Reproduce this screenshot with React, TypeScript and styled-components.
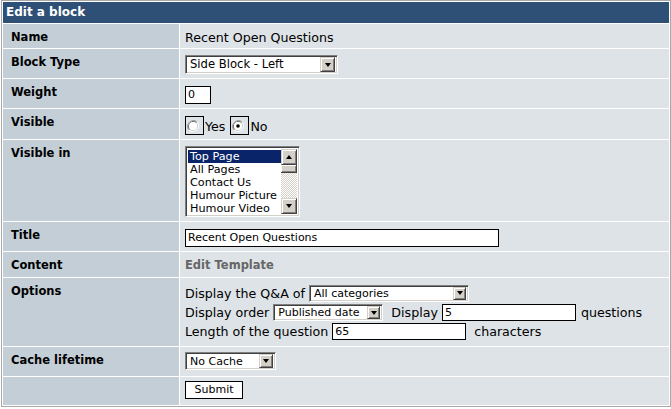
import * as React from 'react';
import styled, { createGlobalStyle } from 'styled-components';

const GlobalStyle = createGlobalStyle`
  body {
    margin: 0;
    background: #ffffff;
    font-family: "DejaVu Sans", Verdana, sans-serif;
    color: #000000;
  }
`;

// row heights read off the original admin table
const BlockForm = styled.div`
  width: 670px;
  margin: 0 0 0 1px;
  box-sizing: border-box;
  border: 1px solid #a8a8a8;
  padding: 1px;
  background: #ffffff;
  display: grid;
  grid-template-columns: 176px 1fr;
  grid-template-rows: 21px 24px 29px 29px 30px 81px 29px 25px 68px 29px 28px;
  gap: 1px;
`;

const Header = styled.div`
  grid-column: 1 / -1;
  line-height: 21px;
  padding: 0 3px;
  background: #2e5077;
  color: #ffffff;
  font-size: 12px;
  font-weight: bold;
`;

const Label = styled.div`
  background: #c3ced7;
  padding: 6px 7px 0 8px;
  font-size: 11.5px;
  line-height: 15px;
  font-weight: bold;
`;

const Value = styled.div<{ $top?: number; $muted?: boolean }>`
  background: #dee3e7;
  padding: ${p => (p.$top === undefined ? 6 : p.$top)}px 5px 0 5px;
  font-size: 12.65px;
  line-height: 15px;
  ${p => (p.$muted ? 'color: #666666; font-weight: bold; font-size: 11.5px;' : '')}
`;

const PlainText = styled.div`
  padding-top: 1px;
  line-height: 14px;
`;

const TextBox = styled.div<{ $w: number; $h?: number }>`
  width: ${p => p.$w}px;
  height: ${p => p.$h || 17}px;
  box-sizing: border-box;
  border: 1px solid #000000;
  background: #ffffff;
  font-size: 11px;
  line-height: ${p => (p.$h || 17) - 2}px;
  padding: 0 2px;
  white-space: nowrap;
  overflow: hidden;
`;

const SelectBox = styled.div<{ $w: number; $h: number; $fs: number }>`
  width: ${p => p.$w}px;
  height: ${p => p.$h}px;
  box-sizing: border-box;
  display: flex;
  align-items: center;
  background: #ffffff;
  border-top: 1px solid #808080;
  border-left: 1px solid #808080;
  border-right: 1px solid #ffffff;
  border-bottom: 1px solid #ffffff;
  box-shadow: inset 1px 1px 0 #404040, inset -1px -1px 0 #d4d0c8;
  padding: 2px 2px 2px 4px;
  font-size: ${p => p.$fs}px;
  white-space: nowrap;
`;

const SelectText = styled.span`
  flex: 1;
`;

const ArrowButton = styled.span<{ $size: number }>`
  width: ${p => p.$size}px;
  height: ${p => p.$size}px;
  box-sizing: border-box;
  display: flex;
  align-items: center;
  justify-content: center;
  background: #d4d0c8;
  border-top: 1px solid #d4d0c8;
  border-left: 1px solid #d4d0c8;
  border-right: 1px solid #404040;
  border-bottom: 1px solid #404040;
  box-shadow: inset 1px 1px 0 #ffffff, inset -1px -1px 0 #808080;
`;

const Triangle = styled.span<{ $up?: boolean }>`
  width: 0;
  height: 0;
  border-left: 3.5px solid transparent;
  border-right: 3.5px solid transparent;
  ${p => (p.$up ? 'border-bottom: 4px solid #000;' : 'border-top: 4px solid #000;')}
`;

const Select: React.FC<{ w: number; h: number; fs: number; text: string }> = ({ w, h, fs, text }) => (
  <SelectBox $w={w} $h={h} $fs={fs}>
    <SelectText>{text}</SelectText>
    <ArrowButton $size={h - 4}>
      <Triangle />
    </ArrowButton>
  </SelectBox>
);

const ListBox = styled.div`
  width: 115px;
  height: 71px;
  box-sizing: border-box;
  display: flex;
  background: #ffffff;
  border-top: 1px solid #808080;
  border-left: 1px solid #808080;
  border-right: 1px solid #ffffff;
  border-bottom: 1px solid #ffffff;
  box-shadow: inset 1px 1px 0 #404040, inset -1px -1px 0 #d4d0c8;
  padding: 2px;
`;

const ListItems = styled.div`
  flex: 1;
  padding-top: 1px;
  overflow: hidden;
`;

const ListItem = styled.div<{ $selected?: boolean }>`
  height: 13px;
  line-height: 13px;
  font-size: 11.2px;
  padding-left: 2px;
  white-space: nowrap;
  background: ${p => (p.$selected ? '#0a246a' : 'transparent')};
  color: ${p => (p.$selected ? '#ffffff' : '#000000')};
`;

const ScrollBar = styled.div`
  width: 16px;
  display: flex;
  flex-direction: column;
  background-color: #eeeeee;
  background-image: repeating-conic-gradient(#d4d0c8 0 25%, #ffffff 0 50%);
  background-size: 2px 2px;
`;

const Thumb = styled.div`
  width: 16px;
  height: 8px;
  box-sizing: border-box;
  background: #d4d0c8;
  border-right: 1px solid #404040;
  border-bottom: 1px solid #404040;
  box-shadow: inset 1px 1px 0 #ffffff, inset -1px -1px 0 #808080;
`;

const Spacer = styled.div`
  flex: 1;
`;

const RadioGroup = styled.div`
  display: flex;
  align-items: center;
`;

const RadioFrame = styled.span`
  width: 19px;
  height: 19px;
  box-sizing: border-box;
  border: 1px solid #000000;
  display: flex;
  align-items: center;
  padding-left: 1px;
  margin-right: 1px;
`;

const RadioLabel = styled.span`
  margin-right: 5px;
  padding-top: 2px;
`;

const Radio: React.FC<{ checked?: boolean }> = ({ checked }) => (
  <RadioFrame>
    <svg width="12" height="12" viewBox="0 0 12 12">
      <path d="M10.2 1.8 A6 6 0 0 0 1.8 10.2" fill="none" stroke="#a0a0a0" strokeWidth="1" />
      <path d="M9.5 2.5 A5 5 0 0 0 2.5 9.5" fill="none" stroke="#606060" strokeWidth="1" />
      <path d="M1.8 10.2 A6 6 0 0 0 10.2 1.8" fill="none" stroke="#ffffff" strokeWidth="1" />
      <path d="M2.5 9.5 A5 5 0 0 0 9.5 2.5" fill="none" stroke="#d4d0c8" strokeWidth="1" />
      <circle cx="6" cy="6" r="4" fill="#ffffff" />
      {checked && <circle cx="6" cy="6" r="1.8" fill="#000000" />}
    </svg>
  </RadioFrame>
);

const OptionLine = styled.div`
  display: flex;
  align-items: center;
  height: 19px;
  white-space: nowrap;

  &:first-child {
    height: 20px;
  }
`;

const Gap = styled.span<{ $w: number }>`
  display: inline-block;
  width: ${p => p.$w}px;
`;

const SubmitButton = styled.button`
  width: 58px;
  height: 18px;
  padding: 0;
  margin: 0;
  display: block;
  border: 1px solid #000000;
  background: #ffffff;
  font-family: "DejaVu Sans", Verdana, sans-serif;
  font-size: 11px;
  line-height: 16px;
  color: #000000;
`;

const App: React.FC = () => (
  <>
    <GlobalStyle />
    <BlockForm>
      <Header>Edit a block</Header>

      <Label>Name</Label>
      <Value>
        <PlainText>Recent Open Questions</PlainText>
      </Value>

      <Label>Block Type</Label>
      <Value $top={6}>
        <Select w={153} h={19} fs={11.6} text="Side Block - Left" />
      </Value>

      <Label>Weight</Label>
      <Value $top={7}>
        <TextBox $w={26} $h={18}>0</TextBox>
      </Value>

      <Label>Visible</Label>
      <Value $top={7}>
        <RadioGroup>
          <Radio />
          <RadioLabel>Yes</RadioLabel>
          <Radio checked />
          <RadioLabel>No</RadioLabel>
        </RadioGroup>
      </Value>

      <Label>Visible in</Label>
      <Value $top={6}>
        <ListBox>
          <ListItems>
            <ListItem $selected>Top Page</ListItem>
            <ListItem>All Pages</ListItem>
            <ListItem>Contact Us</ListItem>
            <ListItem>Humour Picture</ListItem>
            <ListItem>Humour Video</ListItem>
          </ListItems>
          <ScrollBar>
            <ArrowButton $size={16}>
              <Triangle $up />
            </ArrowButton>
            <Thumb />
            <Spacer />
            <ArrowButton $size={16}>
              <Triangle />
            </ArrowButton>
          </ScrollBar>
        </ListBox>
      </Value>

      <Label>Title</Label>
      <Value $top={7}>
        <TextBox $w={314} $h={18}>Recent Open Questions</TextBox>
      </Value>

      <Label>Content</Label>
      <Value $muted>Edit Template</Value>

      <Label>Options</Label>
      <Value $top={5}>
        <OptionLine>
          Display the Q&amp;A of<Gap $w={4} />
          <Select w={160} h={17} fs={11} text="All categories" />
        </OptionLine>
        <OptionLine>
          Display order<Gap $w={4} />
          <Select w={110} h={17} fs={11} text="Published date" />
          <Gap $w={8} />
          Display<Gap $w={4} />
          <TextBox $w={134}>5</TextBox>
          <Gap $w={5} />
          questions
        </OptionLine>
        <OptionLine>
          Length of the question<Gap $w={4} />
          <TextBox $w={134}>65</TextBox>
          <Gap $w={8} />
          characters
        </OptionLine>
      </Value>

      <Label>Cache lifetime</Label>
      <Value $top={5}>
        <Select w={91} h={18} fs={11} text="No Cache" />
      </Value>

      <Label />
      <Value $top={4}>
        <SubmitButton type="button">Submit</SubmitButton>
      </Value>
    </BlockForm>
  </>
);

export default App;
